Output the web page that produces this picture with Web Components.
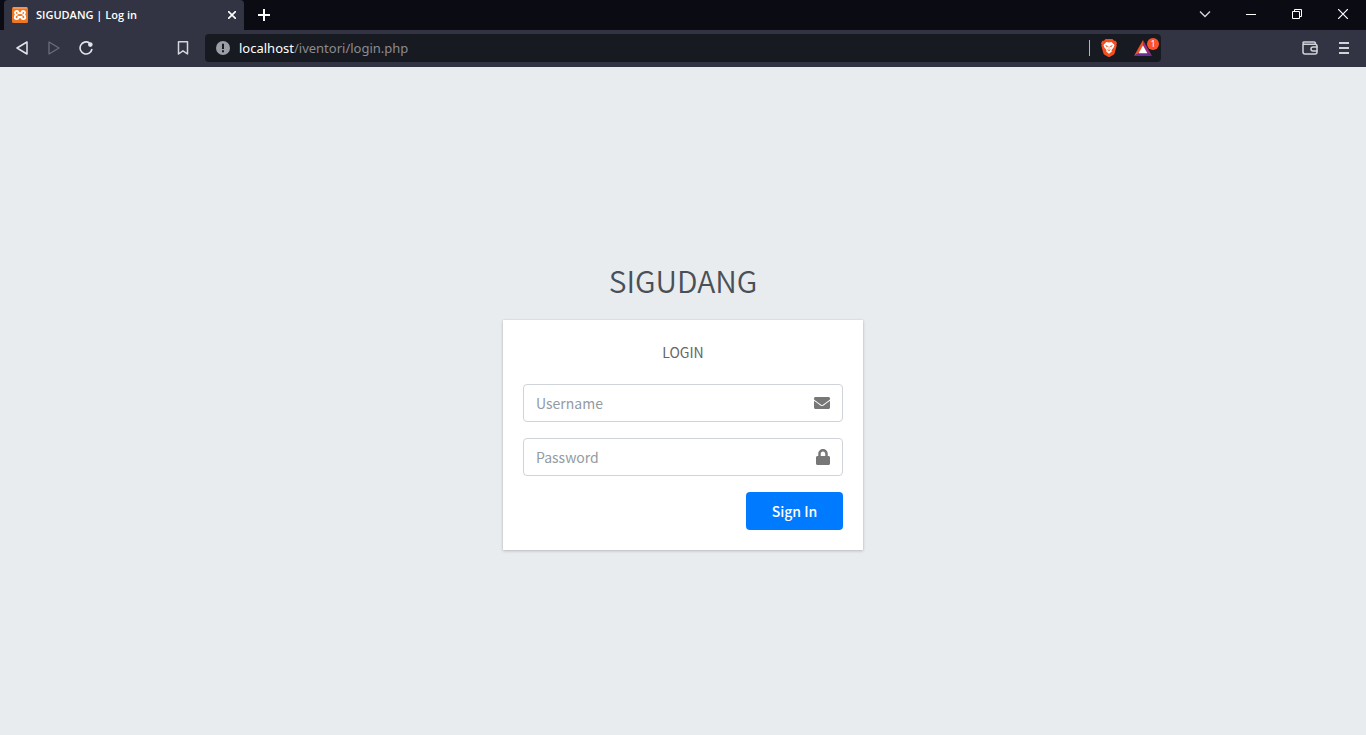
<!DOCTYPE html>
<html lang="id">
<head>
<meta charset="utf-8">
<title>SIGUDANG | Log in</title>
<style>
  html, body { margin: 0; height: 100%; }
  body { background: #e9ecef; font-family: "Noto Sans CJK SC", "Noto Sans", sans-serif; }
</style>
</head>
<body>
<app-window>
  <tab-strip slot="chrome"><browser-tab>SIGUDANG | Log in</browser-tab></tab-strip>
  <tool-bar slot="chrome"><address-bar><span slot="host">localhost</span><span slot="path">/iventori/login.php</span></address-bar></tool-bar>
  <login-page>
    <span slot="brand">SIGUDANG</span>
    <login-card>
      <span slot="message">LOGIN</span>
      <input-field type="text" label="Username" autocomplete="username">
        <svg slot="icon" width="16" height="16" viewBox="0 0 512 512" fill="currentColor"><path d="M502.3 190.8c3.900-3.100 9.700-.2 9.700 4.700V400c0 26.500-21.500 48-48 48H48c-26.500 0-48-21.500-48-48V195.600c0-5 5.700-7.800 9.700-4.700 22.400 17.400 52.100 39.500 154.100 113.600 21.100 15.400 56.700 47.800 92.200 47.600 35.700.3 72-32.800 92.300-47.600 102-74.100 131.600-96.300 154-113.700zM256 320c23.200.4 56.600-29.200 73.400-41.400 132.700-96.300 142.800-104.700 173.400-128.700 5.800-4.500 9.200-11.500 9.200-18.900v-19c0-26.500-21.500-48-48-48H48c-26.500 0-48 21.500-48 48v19c0 7.400 3.400 14.300 9.200 18.900 30.600 23.900 40.700 32.400 173.400 128.700 16.800 12.200 50.200 41.800 73.400 41.400z"/></svg>
      </input-field>
      <input-field type="password" label="Password" autocomplete="current-password">
        <svg slot="icon" width="14" height="16" viewBox="0 0 448 512" fill="currentColor"><path d="M400 224h-24v-72C376 68.200 307.800 0 224 0S72 68.200 72 152v72H48c-26.500 0-48 21.500-48 48v192c0 26.500 21.500 48 48 48h352c26.500 0 48-21.500 48-48V272c0-26.500-21.500-48-48-48zm-104 0H152v-72c0-39.700 32.300-72 72-72s72 32.300 72 72v72z"/></svg>
      </input-field>
      <submit-button slot="action">Sign In</submit-button>
    </login-card>
  </login-page>
</app-window>

<script>
const define = (name, markup, setup) => customElements.define(name, class extends HTMLElement {
  constructor() {
    super();
    const template = document.createElement('template');
    template.innerHTML = markup;
    this.attachShadow({ mode: 'open' }).append(template.content.cloneNode(true));
    if (setup) setup(this, this.shadowRoot);
  }
});

define('app-window', `
  <style>
    :host { display: flex; flex-direction: column; min-height: 100vh; }
    header { flex: none; }
    main { flex: 1; display: flex; }
  </style>
  <header><slot name="chrome"></slot></header>
  <main><slot></slot></main>`);

define('icon-button', `
  <style>
    :host { display: block; width: 32px; height: 28px; color: #e4e5e9; }
    button { display: flex; align-items: center; justify-content: center; width: 100%; height: 100%;
      margin: 0; padding: 0; border: 0; background: none; color: inherit; }
  </style>
  <button type="button"><slot></slot></button>`, (host, root) => {
    root.querySelector('button').setAttribute('aria-label', host.getAttribute('label') || '');
  });

define('tab-strip', `
  <style>
    :host { display: flex; align-items: stretch; height: 30px; padding-left: 4px; background: #0b0b14; }
    .new { width: 28px; height: 30px; margin-left: 6px; color: #fff; }
    .controls { display: flex; margin-left: auto; }
    .controls icon-button { width: 46px; color: #fff; }
  </style>
  <slot></slot>
  <icon-button class="new" label="New tab"><svg width="12" height="12" viewBox="0 0 12 12"><path d="M6 0v12M0 6h12" stroke="currentColor" stroke-width="2"/></svg></icon-button>
  <div class="controls">
    <icon-button label="Search tabs"><svg width="12" height="12" viewBox="0 0 12 12" fill="none"><path d="M1 3.500 6 8.500 11 3.500" stroke="#d8d8dc" stroke-width="1.300"/></svg></icon-button>
    <icon-button label="Minimize"><svg width="10" height="10" viewBox="0 0 10 10"><path d="M0 5.500h10" stroke="currentColor"/></svg></icon-button>
    <icon-button label="Restore"><svg width="10" height="10" viewBox="0 0 10 10" fill="none" stroke="currentColor"><path d="M.5 2.500h7v7h-7zM2.500 2.500v-2h7v7h-2"/></svg></icon-button>
    <icon-button label="Close"><svg width="10" height="10" viewBox="0 0 10 10"><path d="m0 0 10 10M10 0 0 10" stroke="currentColor" stroke-width="1.200"/></svg></icon-button>
  </div>`);

define('browser-tab', `
  <style>
    :host { display: flex; align-items: center; gap: 8px; box-sizing: border-box; width: 240px; padding: 0 4px 0 8px;
      background: #323443; border-radius: 4px 4px 0 0; color: #fff; font: 600 11px/16px "Open Sans", sans-serif; }
    .title { flex: 1; white-space: nowrap; }
    icon-button { width: 16px; height: 16px; color: #fff; }
  </style>
  <svg width="16" height="16" viewBox="0 0 16 16"><rect width="16" height="16" rx="1.500" fill="#ef7622"/><path d="M1 1h14" stroke="#f9b27c"/><path d="M5.800 6.200h4.400M5.800 10h4.400" stroke="#fff" stroke-width="1.800"/><path d="M6.300 6.900C6.800 5 6 3.900 4.600 4 2.500 4.100 2.500 7 4.300 7.900c-2.100.7-2.100 4.100.3 4.200 1.500.1 2.400-1 1.800-2.900M9.700 6.900C9.200 5 10 3.900 11.400 4c2.100.1 2.100 3 .3 3.900 2.100.7 2.100 4.100-.3 4.200-1.500.1-2.400-1-1.800-2.900" fill="none" stroke="#fff" stroke-width="1.900"/></svg>
  <span class="title"><slot></slot></span>
  <icon-button label="Close tab"><svg width="8" height="8" viewBox="0 0 8 8"><path d="m0 0 8 8M8 0 0 8" stroke="currentColor" stroke-width="1.600"/></svg></icon-button>`);

define('tool-bar', `
  <style>
    :host { display: grid; grid-template-columns: 205px 1fr 205px; align-items: start; box-sizing: border-box;
      padding: 4px 0 5px; background: #323443; }
    nav, .menu { display: flex; padding: 0 6px; }
    .bookmark { margin-left: auto; }
    .off { color: #6b6d79; }
    .menu { justify-content: flex-end; gap: 2px; }
    .menu icon-button { color: #d2d3d8; }
  </style>
  <nav aria-label="Browser">
    <icon-button label="Back"><svg width="14" height="14" viewBox="0 0 14 14" fill="none"><path d="M12 1v12L2 7z" stroke="currentColor" stroke-width="1.500" stroke-linejoin="round"/></svg></icon-button>
    <icon-button class="off" label="Forward"><svg width="14" height="14" viewBox="0 0 14 14" fill="none"><path d="M2 1v12L12 7z" stroke="currentColor" stroke-width="1.300" stroke-linejoin="round"/></svg></icon-button>
    <icon-button label="Reload"><svg width="14" height="14" viewBox="0 0 14 14"><path d="M10.500 2A6 6 0 1 0 13 8" fill="none" stroke="currentColor" stroke-width="1.600"/><circle cx="11.300" cy="3.600" r="2.300" fill="currentColor"/></svg></icon-button>
    <icon-button class="bookmark" label="Bookmark"><svg width="12" height="14" viewBox="0 0 12 14" fill="none"><path d="M1.500.8h9v12.200L6 9.800 1.500 13z" stroke="#d5d6da" stroke-width="1.500" stroke-linejoin="round"/></svg></icon-button>
  </nav>
  <slot></slot>
  <div class="menu">
    <icon-button label="Wallet"><svg width="16" height="14" viewBox="0 0 16 14" fill="none" stroke="currentColor" stroke-width="1.500"><path d="M1 3v8q0 2 2 2h10q2 0 2-2V5q0-1.800-2-1.800H2.500Q1 3.200 1 2T2.500 1H12q1.500 0 1.500 2"/><path d="M15.500 6H11a2 2 0 0 0 0 4h4.500"/></svg></icon-button>
    <icon-button label="Menu"><svg width="10" height="12" viewBox="0 0 10 12"><path d="M0 1h10M0 6h10M0 11h10" stroke="currentColor" stroke-width="1.800"/></svg></icon-button>
  </div>`);

define('address-bar', `
  <style>
    :host { display: flex; align-items: center; box-sizing: border-box; height: 28px; padding: 0 8px 0 11px;
      background: #181a21; border-radius: 4px; color: #fff; font: 13px/20px "Noto Sans", sans-serif; }
    .info { flex: none; margin-right: 9px; }
    .url { flex: 1; white-space: nowrap; }
    .path { color: #8b8c90; }
    .line { width: 1px; height: 16px; margin-right: 11px; background: #b4b5b8; }
    .rewards { position: relative; width: 19px; height: 16px; margin-left: 17px; }
    .rewards svg { display: block; }
    .badge { position: absolute; top: -2px; right: -6px; width: 12px; height: 12px; border-radius: 50%;
      background: #fb542b; font-size: 9px; line-height: 12px; text-align: center; }
  </style>
  <svg class="info" width="14" height="14" viewBox="0 0 14 14"><circle cx="7" cy="7" r="7" fill="#9b9ea6"/><path d="M7 2.800v5.200M7 9.300v2" stroke="#181a21" stroke-width="2"/></svg>
  <span class="url"><slot name="host"></slot><span class="path"><slot name="path"></slot></span></span>
  <span class="line"></span>
  <svg width="16" height="18" viewBox="0 0 16 18"><path d="M4.500 0h7L13 1.800l1.500-.1L16 4l-.6 1.500.3 1-2 7.500q-.3 1-1.200 1.700L8 18.300l-4.500-2.600Q2.600 15 2.300 14l-2-7.500.3-1L0 4l1.500-2.300 1.500.1z" fill="#f4501e"/><path d="m5.500 3 2.500.6 2.500-.6 3 3-.9 2.600L10.500 11l.3 1.500L8 14.700l-2.800-2.200.3-1.500-2.100-2.400L2.500 6z" fill="#fff"/><path d="m4.600 6.500 2 .6-.5.9zM11.400 6.500l-2 .6.5.9zM8 7v3M6.600 10.700l1.400.6 1.400-.6-1.400 1z" fill="#f4501e" stroke="#f4501e" stroke-width=".5"/></svg>
  <div class="rewards">
    <svg width="18" height="16" viewBox="0 0 18 16"><path d="M9 0 0 16l9-5z" fill="#f0532c"/><path d="M9 0v6l4.300 7L18 16z" fill="#9b2f7c"/><path d="M0 16h18l-4.600-3H4.600z" fill="#66309a"/><path d="m9 5.500 4.400 7.700H4.600z" fill="#fff"/></svg>
    <span class="badge">1</span>
  </div>`);

define('login-page', `
  <style>
    :host { flex: 1; display: flex; flex-direction: column; align-items: center; justify-content: center;
      padding-top: 4px; background: #e9ecef; }
    section { width: 360px; max-width: 90%; }
    h1 { margin: 0 0 16px; color: #495057; font-size: 30px; font-weight: 350; line-height: 48px; text-align: center; }
  </style>
  <section><h1><slot name="brand"></slot></h1><slot></slot></section>`);

define('login-card', `
  <style>
    :host { display: block; padding: 20px; background: #fff; color: #666;
      box-shadow: 0 0 1px rgba(0,0,0,.125), 0 1px 3px rgba(0,0,0,.2); }
    p { margin: 0 0 20px; font-size: 14px; line-height: 24px; text-align: center; }
    form { display: grid; gap: 16px; }
    .actions { display: flex; justify-content: flex-end; }
  </style>
  <p><slot name="message"></slot></p>
  <form><slot></slot><div class="actions"><slot name="action"></slot></div></form>`);

define('input-field', `
  <style>
    :host { display: flex; box-sizing: border-box; height: 38px; padding-right: 12px; align-items: center;
      border: 1px solid #ced4da; border-radius: 4px; background: #fff; color: #777; }
    input { flex: 1; min-width: 0; height: 100%; box-sizing: border-box; margin: 0; padding: 0 12px; border: 0;
      outline: 0; background: none; color: #495057; font: inherit; font-size: 14px; }
    input::placeholder { color: #939ba2; opacity: 1; }
    label { display: flex; align-items: center; }
  </style>
  <input id="field">
  <label for="field"><slot name="icon"></slot></label>`, (host, root) => {
    const input = root.querySelector('input');
    const text = host.getAttribute('label');
    input.type = host.getAttribute('type') || 'text';
    input.placeholder = text;
    input.setAttribute('aria-label', text);
    input.autocomplete = host.getAttribute('autocomplete') || '';
  });

define('submit-button', `
  <style>
    :host { display: block; width: 97px; }
    button { width: 100%; height: 38px; margin: 0; padding: 0; border: 0; border-radius: 4px; background: #007bff;
      color: #fff; font: inherit; font-size: 14px; font-weight: 500; line-height: 24px; }
  </style>
  <button type="submit"><slot></slot></button>`);
</script>
</body>
</html>
